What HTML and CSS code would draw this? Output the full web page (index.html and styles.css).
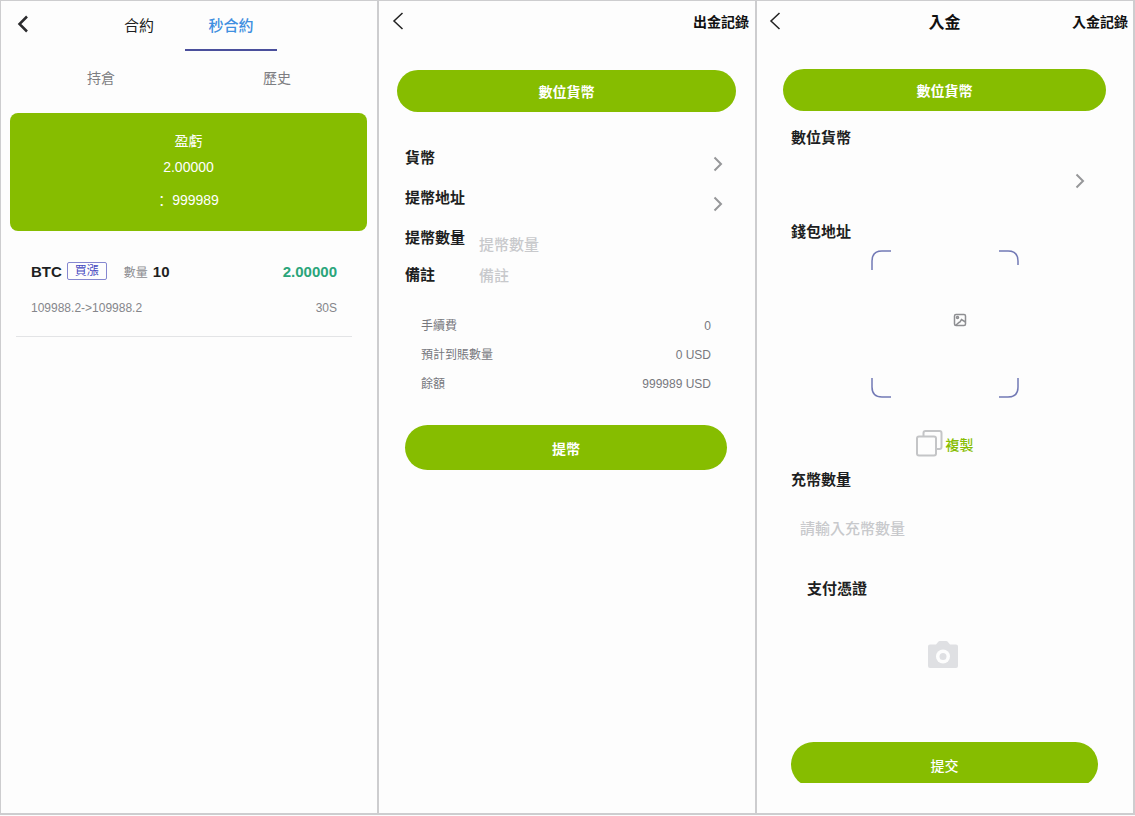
FILE: index.html
```html
<!DOCTYPE html>
<html lang="zh-Hant">
<head>
  <meta charset="UTF-8">
  <meta name="viewport" content="width=device-width, initial-scale=1.0">
  <title>秒合約 / 出金 / 入金</title>
  <link rel="stylesheet" href="styles.css">
</head>
<body>
  <main class="screens">

    <!-- Contract records -->
    <section class="screen contract">
      <header class="contract-header">
        <button type="button" class="back-btn bold" aria-label="返回">
          <svg width="12" height="18" viewBox="0 0 12 18"><path d="M10 1.500 2.500 9l7.500 7.500"/></svg>
        </button>
        <nav class="tabs">
          <button type="button" class="tab">合約</button>
          <button type="button" class="tab active">秒合約</button>
        </nav>
      </header>

      <nav class="sub-tabs">
        <button type="button">持倉</button>
        <button type="button">歷史</button>
      </nav>

      <div class="profit-card">
        <p>盈虧</p>
        <p>2.00000</p>
        <p class="balance" lang="zh-CN">：999989</p>
      </div>

      <article class="record">
        <div class="record-top">
          <strong>BTC</strong>
          <span class="direction">買漲</span>
          <span class="qty-label">數量</span>
          <strong>10</strong>
          <strong class="profit">2.00000</strong>
        </div>
        <div class="record-bottom">
          <span>109988.2-&gt;109988.2</span>
          <span>30S</span>
        </div>
      </article>
    </section>

    <!-- Withdraw -->
    <section class="screen withdraw">
      <header class="header">
        <button type="button" class="back-btn" aria-label="返回">
          <svg width="12" height="18" viewBox="0 0 12 18"><path d="M10.500 1 2 9l8.500 8"/></svg>
        </button>
        <a href="#" class="header-link">出金記錄</a>
      </header>

      <button type="button" class="pill-btn type-btn">數位貨幣</button>

      <form class="withdraw-form">
        <button type="button" class="row">
          <span>貨幣</span>
          <svg class="arrow" width="10" height="16" viewBox="0 0 10 16"><path d="M1.500 1.500 8 8l-6.500 6.500"/></svg>
        </button>
        <button type="button" class="row">
          <span>提幣地址</span>
          <svg class="arrow" width="10" height="16" viewBox="0 0 10 16"><path d="M1.500 1.500 8 8l-6.500 6.500"/></svg>
        </button>
        <div class="row">
          <label for="amount">提幣數量</label>
          <input type="text" id="amount" class="low" placeholder="提幣數量">
        </div>
        <div class="row short">
          <label for="remark">備註</label>
          <input type="text" id="remark" placeholder="備註">
        </div>

        <dl class="fees">
          <div><dt>手續費</dt><dd>0</dd></div>
          <div><dt>預計到賬數量</dt><dd>0 USD</dd></div>
          <div><dt>餘額</dt><dd>999989 USD</dd></div>
        </dl>

        <button type="button" class="pill-btn submit-btn">提幣</button>
      </form>
    </section>

    <!-- Deposit -->
    <section class="screen deposit">
      <header class="header">
        <button type="button" class="back-btn" aria-label="返回">
          <svg width="12" height="18" viewBox="0 0 12 18"><path d="M10.500 1 2 9l8.500 8"/></svg>
        </button>
        <h1>入金</h1>
        <a href="#" class="header-link">入金記錄</a>
      </header>

      <button type="button" class="pill-btn type-btn">數位貨幣</button>

      <form class="deposit-form">
        <h2>數位貨幣</h2>
        <button type="button" class="coin-select" aria-label="選擇貨幣">
          <svg class="arrow" width="10" height="16" viewBox="0 0 10 16"><path d="M1.500 1.500 8 8l-6.500 6.500"/></svg>
        </button>

        <h2>錢包地址</h2>
        <div class="qr-box">
          <svg class="corners" width="148" height="148" viewBox="0 0 148 148">
            <path d="M1 20V11Q1 1 11 1h9M128 1h9q10 0 10 10v4M1 128v9q0 10 10 10h9M128 147h9q10 0 10-10v-9"/>
          </svg>
          <svg class="qr-image" width="14" height="14" viewBox="0 0 14 14">
            <rect x="1.500" y="1.500" width="11" height="11" rx="1.500"/>
            <circle cx="4.500" cy="4.500" r="1"/>
            <path d="M2.500 12.500 6 9.500l1-.5 1.500-2.500 4 2.500"/>
          </svg>
        </div>

        <button type="button" class="copy-btn">
          <svg width="27" height="27" viewBox="0 0 27 27">
            <path d="M7.500 6.500V3q0-2 2-2h14q2 0 2 2v14q0 2-2 2h-3"/>
            <rect x="1" y="6.500" width="19" height="19" rx="2"/>
          </svg>
          <span>複製</span>
        </button>

        <label for="depositAmount">充幣數量</label>
        <input type="text" id="depositAmount" placeholder="請輸入充幣數量">

        <h2 class="proof-title">支付憑證</h2>
        <button type="button" class="upload-btn" aria-label="上傳支付憑證">
          <svg width="32" height="29" viewBox="0 0 32 29">
            <path d="M3 4.500h6L11.500 1.500q.5-.5 1.200-.5h6.600q.7 0 1.200.5L23 4.500h6q2 0 2 2V26q0 2-2 2H3q-2 0-2-2V6.500q0-2 2-2z" fill="#dfe0e3"/>
            <circle cx="16" cy="16.500" r="7" fill="#fdfdfd"/>
            <circle cx="16" cy="16.500" r="3.500" fill="#dfe0e3"/>
          </svg>
        </button>

        <div class="submit-wrap">
          <button type="button" class="pill-btn submit-btn">提交</button>
        </div>
      </form>
    </section>

  </main>
</body>
</html>
```

FILE: styles.css
```css
* {
  box-sizing: border-box;
}

body {
  margin: 0;
  background: #fdfdfd;
  font-family: "Liberation Sans", "Noto Sans CJK TC", sans-serif;
  font-size: 15px;
  color: #1e1f22;
}

h1, h2, p, dl, dd {
  margin: 0;
}

button, input {
  font: inherit;
  color: inherit;
  background: none;
  border: none;
  padding: 0;
}

button {
  cursor: pointer;
}

svg {
  display: block;
  fill: none;
  flex-shrink: 0;
}

.screens {
  display: grid;
  grid-template-columns: repeat(3, 1fr);
  gap: 2px;
  min-height: calc(100vh - 1px);
  padding: 1px 2px 2px 1px;
  background: #cdcdcf;
}

.screen {
  background: #fdfdfd;
  min-width: 0;
}

.back-btn svg {
  stroke: #222;
  stroke-width: 1.5;
}

.back-btn.bold svg {
  stroke: #2b2b2d;
  stroke-width: 2.5;
}

.arrow {
  stroke: #969799;
  stroke-width: 2;
}

.pill-btn {
  display: block;
  background: #86bd00;
  color: white;
  font-size: 14px;
  font-weight: bold;
}

/* contract */
.contract-header {
  display: flex;
  height: 50px;
}

.contract-header .back-btn {
  width: 92px;
  padding: 0 16px 4px;
}

.tabs {
  display: flex;
}

.tab {
  width: 92px;
  padding-bottom: 2px;
  border-bottom: 2px solid transparent;
}

.tab.active {
  color: #3f8fe0;
  border-bottom-color: #4a4f9c;
  font-weight: 500;
}

.sub-tabs {
  display: grid;
  grid-template-columns: 1fr 1fr;
  height: 52px;
  padding: 0 12px;
  font-size: 14px;
  color: #7d7e82;
}

.profit-card {
  margin: 10px 10px 0 9px;
  padding: 15px 0 18px;
  border-radius: 8px;
  background: #86bd00;
  color: white;
  font-size: 14px;
  line-height: 26px;
  text-align: center;
}

.profit-card .balance {
  margin-top: 7px;
  font-family: "Liberation Sans", "Noto Sans CJK SC", sans-serif;
}

.record {
  margin: 24px 25px 0 15px;
  padding: 0 15px 18px;
  border-bottom: 1px solid #e3e4e6;
}

.record-top {
  display: flex;
  align-items: center;
  height: 32px;
  font-size: 15px;
}

.direction {
  width: 40px;
  margin: 0 17px 0 5px;
  border: 1px solid #8587d0;
  border-radius: 2px;
  color: #4548c0;
  font-size: 12px;
  line-height: 16px;
  text-align: center;
}

.qty-label {
  margin-right: 5px;
  color: #8b8c90;
  font-size: 12px;
}

.profit {
  margin-left: auto;
  color: #2aa57a;
}

.record-bottom {
  display: flex;
  justify-content: space-between;
  padding-top: 11px;
  color: #85868b;
  font-size: 12px;
  line-height: 20px;
}

/* shared header */
.header {
  display: grid;
  grid-template-columns: 1fr auto 1fr;
  align-items: center;
  height: 40px;
  padding: 0 6px 0 13px;
}

.header .back-btn {
  justify-self: start;
}

.header h1 {
  font-size: 16px;
  color: #111;
}

.header-link {
  grid-column: 3;
  justify-self: end;
  color: #111;
  font-size: 14px;
  font-weight: bold;
  text-decoration: none;
}

/* withdraw */
.withdraw .type-btn {
  width: calc(100% - 37px);
  height: 42px;
  margin: 29px 18px 0;
  border-radius: 21px;
}

.withdraw-form {
  padding: 26px 28px 0 26px;
}

.row {
  display: flex;
  width: 100%;
  height: 40px;
  line-height: 40px;
  font-weight: bold;
  text-align: left;
}

.row span,
.row label {
  width: 74px;
}

.row .arrow {
  margin: 18px 4px 0 auto;
}

.row input {
  flex: 1;
  min-width: 0;
  height: 100%;
}

.row .low {
  padding-top: 12px;
}

.row.short {
  height: 34px;
  line-height: 34px;
}

input::placeholder {
  color: #c8c9cc;
  font-weight: 500;
  opacity: 1;
}

.fees {
  margin: 20px 16px 26px;
  color: #77787d;
  font-size: 12px;
  line-height: 29px;
}

.fees div {
  display: flex;
  justify-content: space-between;
}

.submit-btn {
  width: 100%;
  height: 45px;
  border-radius: 23px;
}

/* deposit */
.deposit .header {
  padding: 0 5px 0 12px;
  height: 39px;
}

.deposit .header h1 {
  margin-right: 8px;
}

.deposit .type-btn {
  width: calc(100% - 53px);
  height: 42px;
  margin: 29px 26px 0;
  border-radius: 21px;
}

.deposit-form {
  display: flex;
  flex-direction: column;
  padding: 16px 35px 0 34px;
}

.deposit-form h2,
.deposit-form label {
  font-size: 15px;
  font-weight: bold;
  line-height: 22px;
}

.coin-select {
  display: flex;
  align-items: center;
  justify-content: flex-end;
  height: 64px;
  margin-bottom: 8px;
  padding-right: 13px;
}

.qr-box {
  display: grid;
  place-items: center;
  margin-top: 7px;
}

.qr-box svg {
  grid-area: 1 / 1;
}

.corners {
  stroke: #7279b5;
  stroke-width: 1.5;
}

.qr-image {
  margin-left: 30px;
  margin-top: -8px;
  stroke: #8e8f92;
  stroke-width: 1.5;
}

.copy-btn {
  display: flex;
  align-items: center;
  align-self: center;
  gap: 3px;
  margin-top: 32px;
  color: #86bd00;
  font-size: 14px;
  font-weight: 500;
}

.copy-btn svg {
  stroke: #c4c5c7;
  stroke-width: 2;
}

.deposit-form label {
  margin-top: 12px;
}

.deposit-form input {
  height: 50px;
  margin-top: 12px;
  padding: 0 9px;
}

.proof-title {
  margin: 25px 16px 0;
}

.upload-btn {
  align-self: center;
  margin: 40px 4px 0 0;
}

.submit-wrap {
  height: 41px;
  margin-top: 73px;
  overflow: hidden;
}

.submit-wrap .submit-btn {
  font-weight: 500;
}

@media (max-width: 768px) {
  .screens {
    grid-template-columns: 1fr;
  }
}
```
